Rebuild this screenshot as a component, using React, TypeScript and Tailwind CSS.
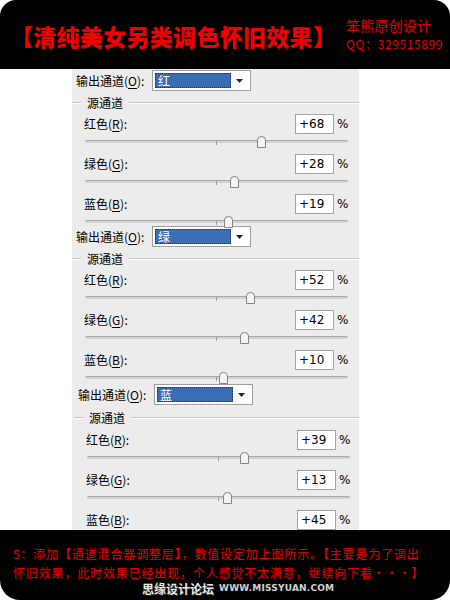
import React from 'react'

const cjk = "font-['Noto_Sans_CJK_SC',sans-serif]"

interface Channel {
  name: string
  key: string
  value: number
}

interface Section {
  output: string
  channels: Channel[]
  height: string
  shift?: boolean
}

const sections: Section[] = [
  {
    output: '红',
    height: 'h-[156px]',
    channels: [
      { name: '红色', key: 'R', value: 68 },
      { name: '绿色', key: 'G', value: 28 },
      { name: '蓝色', key: 'B', value: 19 },
    ],
  },
  {
    output: '绿',
    height: 'h-[157px]',
    channels: [
      { name: '红色', key: 'R', value: 52 },
      { name: '绿色', key: 'G', value: 42 },
      { name: '蓝色', key: 'B', value: 10 },
    ],
  },
  {
    output: '蓝',
    height: 'h-[160px]',
    shift: true,
    channels: [
      { name: '红色', key: 'R', value: 39 },
      { name: '绿色', key: 'G', value: 13 },
      { name: '蓝色', key: 'B', value: 45 },
    ],
  },
]

// track is 263px wide, -200..+200
const thumbLeft = (v: number) => 131.5 + (v / 200) * 131.5 - 4.5

function Slider({ value }: { value: number }) {
  return (
    <div className="relative h-[20px] ml-[13px] w-[263px]">
      <div className="absolute left-0 right-0 top-[6px] h-[3px] rounded-full bg-[#d2d2d2] border-t border-[#a9a9a9]" />
      <div className="absolute left-[131px] top-[7px] w-px h-[4px] bg-[#9c9c9c]" />
      <svg
        className="absolute top-[2px]"
        style={{ left: thumbLeft(value) }}
        width="9"
        height="12"
        viewBox="0 0 9 12"
      >
        <path d="M0.5 4 Q0.5 0.5 4.5 0.5 Q8.5 0.5 8.5 4 V11.5 H0.5 Z" fill="#f3f3f3" stroke="#858585" />
      </svg>
    </div>
  )
}

function ChannelRow({ ch }: { ch: Channel }) {
  return (
    <div>
      <div className="flex items-center h-[20px] pl-[12px] pr-[11px]">
        <span className="flex-1 text-[12px] text-black">
          {ch.name}(<span className="underline underline-offset-2">{ch.key}</span>):
        </span>
        <div className="w-[39px] h-[20px] bg-white border border-[#a3a3a3] flex items-center pl-[3px] text-[12px] text-black font-['DejaVu_Sans',sans-serif]">
          +{ch.value}
        </div>
        <span className="ml-[3px] w-[11px] text-[12px] text-black font-['DejaVu_Sans',sans-serif]">%</span>
      </div>
      <Slider value={ch.value} />
    </div>
  )
}

function MixerSection({ s }: { s: Section }) {
  return (
    <div className={`${s.height} w-[287px] shrink-0 ${s.shift ? 'ml-[2px] pt-[1px]' : ''}`}>
      <div className="flex items-center h-[21px] pl-[4px]">
        <span className="w-[76px] text-[12px] text-black">
          输出通道(<span className="underline underline-offset-2">O</span>):
        </span>
        <div className="w-[99px] h-[21px] bg-white border border-[#a0a0a0] flex items-center p-[2px]">
          <div className="w-[76px] h-full bg-[#3b6db4] outline-1 outline-dotted outline-[#1d2f55] -outline-offset-1 flex items-center pl-[3px] text-[12px] text-white">
            {s.output}
          </div>
          <div className="flex-1 flex justify-center">
            <svg width="7" height="4" viewBox="0 0 7 4">
              <path d="M0 0 H7 L3.5 4 Z" fill="#1a2553" />
            </svg>
          </div>
        </div>
      </div>
      <div className={`flex items-center ${s.shift ? 'h-[25px]' : 'h-[23px]'}`}>
        <div className="w-[9px] h-[2px] border-t border-[#c4c4c4] bg-white" />
        <span className="px-[6px] text-[12px] text-black">源通道</span>
        <div className="flex-1 h-[2px] border-t border-[#c4c4c4] bg-white" />
      </div>
      {s.channels.map((ch) => (
        <ChannelRow key={ch.key} ch={ch} />
      ))}
    </div>
  )
}

export default function App() {
  return (
    <div className={`w-[450px] h-[600px] bg-white flex flex-col ${cjk}`}>
      <div className="h-[69px] bg-black rounded-t-[16px] flex items-center pl-[10px] pt-[4px]">
        <div className="text-[23px] leading-none font-black text-[#f00000] tracking-[0.3px]">
          【清纯美女另类调色怀旧效果】
        </div>
        <div className="ml-auto pr-[7px] flex flex-col gap-[4px] text-[#e00000] -mt-[4px]">
          <div className="text-[14px] leading-[15px] tracking-[0.2px]">笨熊原创设计</div>
          <div className="text-[12px] leading-[14px] tracking-[0.6px]">QQ：329515899</div>
        </div>
      </div>

      <div className="flex-1 flex min-h-0">
        <div className="w-[72px] bg-white" />
        <div className="w-[287px] bg-[#ececec] overflow-hidden pt-[1px] flex flex-col">
          {sections.map((s) => (
            <MixerSection key={s.output} s={s} />
          ))}
        </div>
        <div className="flex-1 bg-white" />
      </div>

      <div className="relative h-[70px] bg-black rounded-b-[20px] pl-[13px] pt-[14px] text-[12px] leading-[19px] tracking-[0.85px] text-[#e80000]">
        <div>5：添加【通道混合器调整层】，数值设定加上图所示。【主要是为了调出</div>
        <div>怀旧效果，此时效果已经出现，个人感觉不太满意，继续向下看・・・】</div>
        <div className="absolute left-[142px] top-[49px] flex items-center gap-[5px]">
          <span className="text-[12px] font-bold tracking-normal text-[#e8e8e8] [text-shadow:0_0_2px_#000,1px_1px_0_#333]">
            思缘设计论坛
          </span>
          <span className="text-[9px] font-bold tracking-[0.2px] text-[#d0d0d0] font-['DejaVu_Sans',sans-serif]">
            WWW.MISSYUAN.COM
          </span>
        </div>
      </div>
    </div>
  )
}
